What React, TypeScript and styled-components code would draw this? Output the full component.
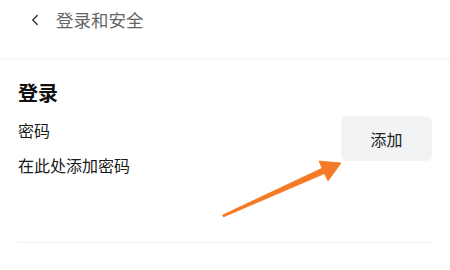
import styled, { createGlobalStyle } from 'styled-components'
import { ChevronLeft } from 'lucide-react'

const GlobalStyle = createGlobalStyle`
  html, body {
    margin: 0;
    padding: 0;
    background: #fff;
  }
  body {
    font-family: 'Noto Sans CJK SC', 'Noto Sans', sans-serif;
    color: #1a1a1a;
  }
`

// ページ全体
const Page = styled.div`
  position: relative;
  width: 450px;
  height: 270px;
  overflow: hidden;
  background: #fff;
`

// ヘッダー
const Header = styled.header`
  height: 60px;
  box-sizing: border-box;
  padding: 7px 0 0 26px;
  border-bottom: 3px solid #f8f8f8;
`

const HeaderRow = styled.div`
  display: flex;
  align-items: center;
  gap: 12px;
  height: 26px;
  color: #333;
`

const HeaderTitle = styled.span`
  font-size: 17.5px;
  color: #666;
  line-height: 26px;
`

// 登録セクション
const Section = styled.section`
  padding: 19px 18px 0;
`

const SectionTitle = styled.h2`
  margin: 0;
  font-size: 20px;
  line-height: 28px;
  font-weight: 700;
  color: #111;
`

const Row = styled.div`
  display: flex;
  justify-content: space-between;
  align-items: flex-start;
  margin-top: 9px;
`

const Info = styled.div`
  display: flex;
  flex-direction: column;
  gap: 13px;
  padding-top: 3px;
`

const Text = styled.span`
  font-size: 16px;
  line-height: 22px;
  color: #1a1a1a;
`

const AddButton = styled.button`
  width: 91px;
  height: 45px;
  border: none;
  border-radius: 6px;
  background: #f1f3f5;
  font-family: inherit;
  font-size: 16px;
  color: #222;
  cursor: pointer;
`

const Divider = styled.div`
  margin-top: 66px;
  height: 1px;
  background: #f0f0f0;
`

// 注釈の矢印（コンテンツの上に重ねる）
const ArrowLayer = styled.svg`
  position: absolute;
  top: 0;
  left: 0;
  pointer-events: none;
`

export default function App() {
  return (
    <Page>
      <GlobalStyle />
      <Header>
        <HeaderRow>
          <ChevronLeft size={18} strokeWidth={1.8} />
          <HeaderTitle>登录和安全</HeaderTitle>
        </HeaderRow>
      </Header>
      <Section>
        <SectionTitle>登录</SectionTitle>
        <Row>
          <Info>
            <Text>密码</Text>
            <Text>在此处添加密码</Text>
          </Info>
          <AddButton>添加</AddButton>
        </Row>
        <Divider />
      </Section>
      <ArrowLayer width={450} height={270} viewBox="0 0 450 270">
        <polygon
          points="222.6,215.1 322.1,168.2 319,161 341,163 328,181 324.5,173.6 223.4,216.9"
          fill="#f47a25"
          stroke="#f47a25"
          strokeWidth={0.8}
          strokeLinejoin="round"
        />
      </ArrowLayer>
    </Page>
  )
}
